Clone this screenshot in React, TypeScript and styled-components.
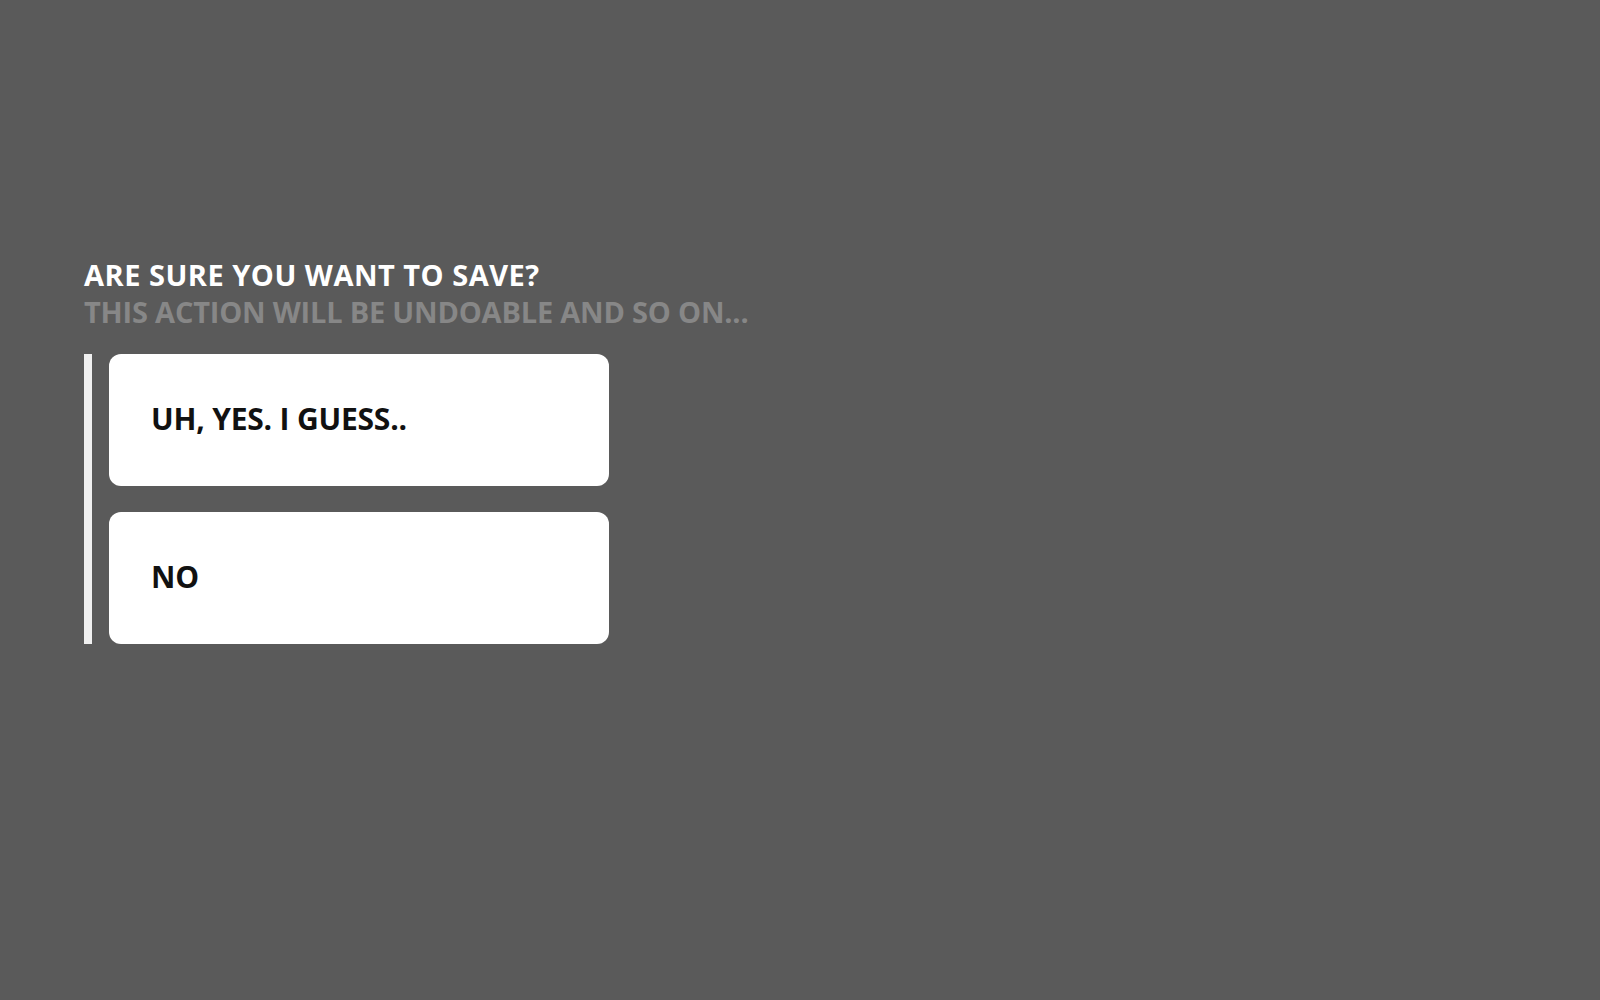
import React from "react";
import styled, { createGlobalStyle } from "styled-components";

const Global = createGlobalStyle`
  html, body {
    margin: 0;
    padding: 0;
    background: #5a5a5a;
  }
  body {
    font-family: "Open Sans", "DejaVu Sans", sans-serif;
    font-stretch: 100%;
  }
`;

const Page = styled.div`
  min-height: 1000px;
  padding: 256px 0 0 84px;
  box-sizing: border-box;
`;

const Heading = styled.div`
  display: flex;
  flex-direction: column;
  margin-bottom: 24px;
`;

const Title = styled.h1<{ $muted?: boolean }>`
  margin: 0;
  font-size: 29px;
  line-height: 37px;
  font-weight: 700;
  text-transform: uppercase;
  letter-spacing: ${(p) => (p.$muted ? "-0.2px" : "0.5px")};
  color: ${(p) => (p.$muted ? "#878787" : "#ffffff")};
`;

const Options = styled.div`
  display: flex;
  flex-direction: column;
  gap: 26px;
  border-left: 8px solid #f0f0f0;
  padding-left: 17px;
  width: 500px;
`;

const Option = styled.button`
  display: flex;
  align-items: center;
  height: 132px;
  padding: 0 0 4px 42px;
  border: none;
  border-radius: 12px;
  background: #ffffff;
  color: #111111;
  font-family: inherit;
  font-stretch: inherit;
  font-size: 30px;
  font-weight: 700;
  letter-spacing: -0.2px;
  text-align: left;
  cursor: pointer;
`;

export default function App() {
  return (
    <>
      <Global />
      <Page>
        <Heading>
          <Title>Are sure you want to save?</Title>
          <Title $muted>This action will be undoable and so on...</Title>
        </Heading>
        <Options>
          <Option>UH, YES. I GUESS..</Option>
          <Option>NO</Option>
        </Options>
      </Page>
    </>
  );
}
